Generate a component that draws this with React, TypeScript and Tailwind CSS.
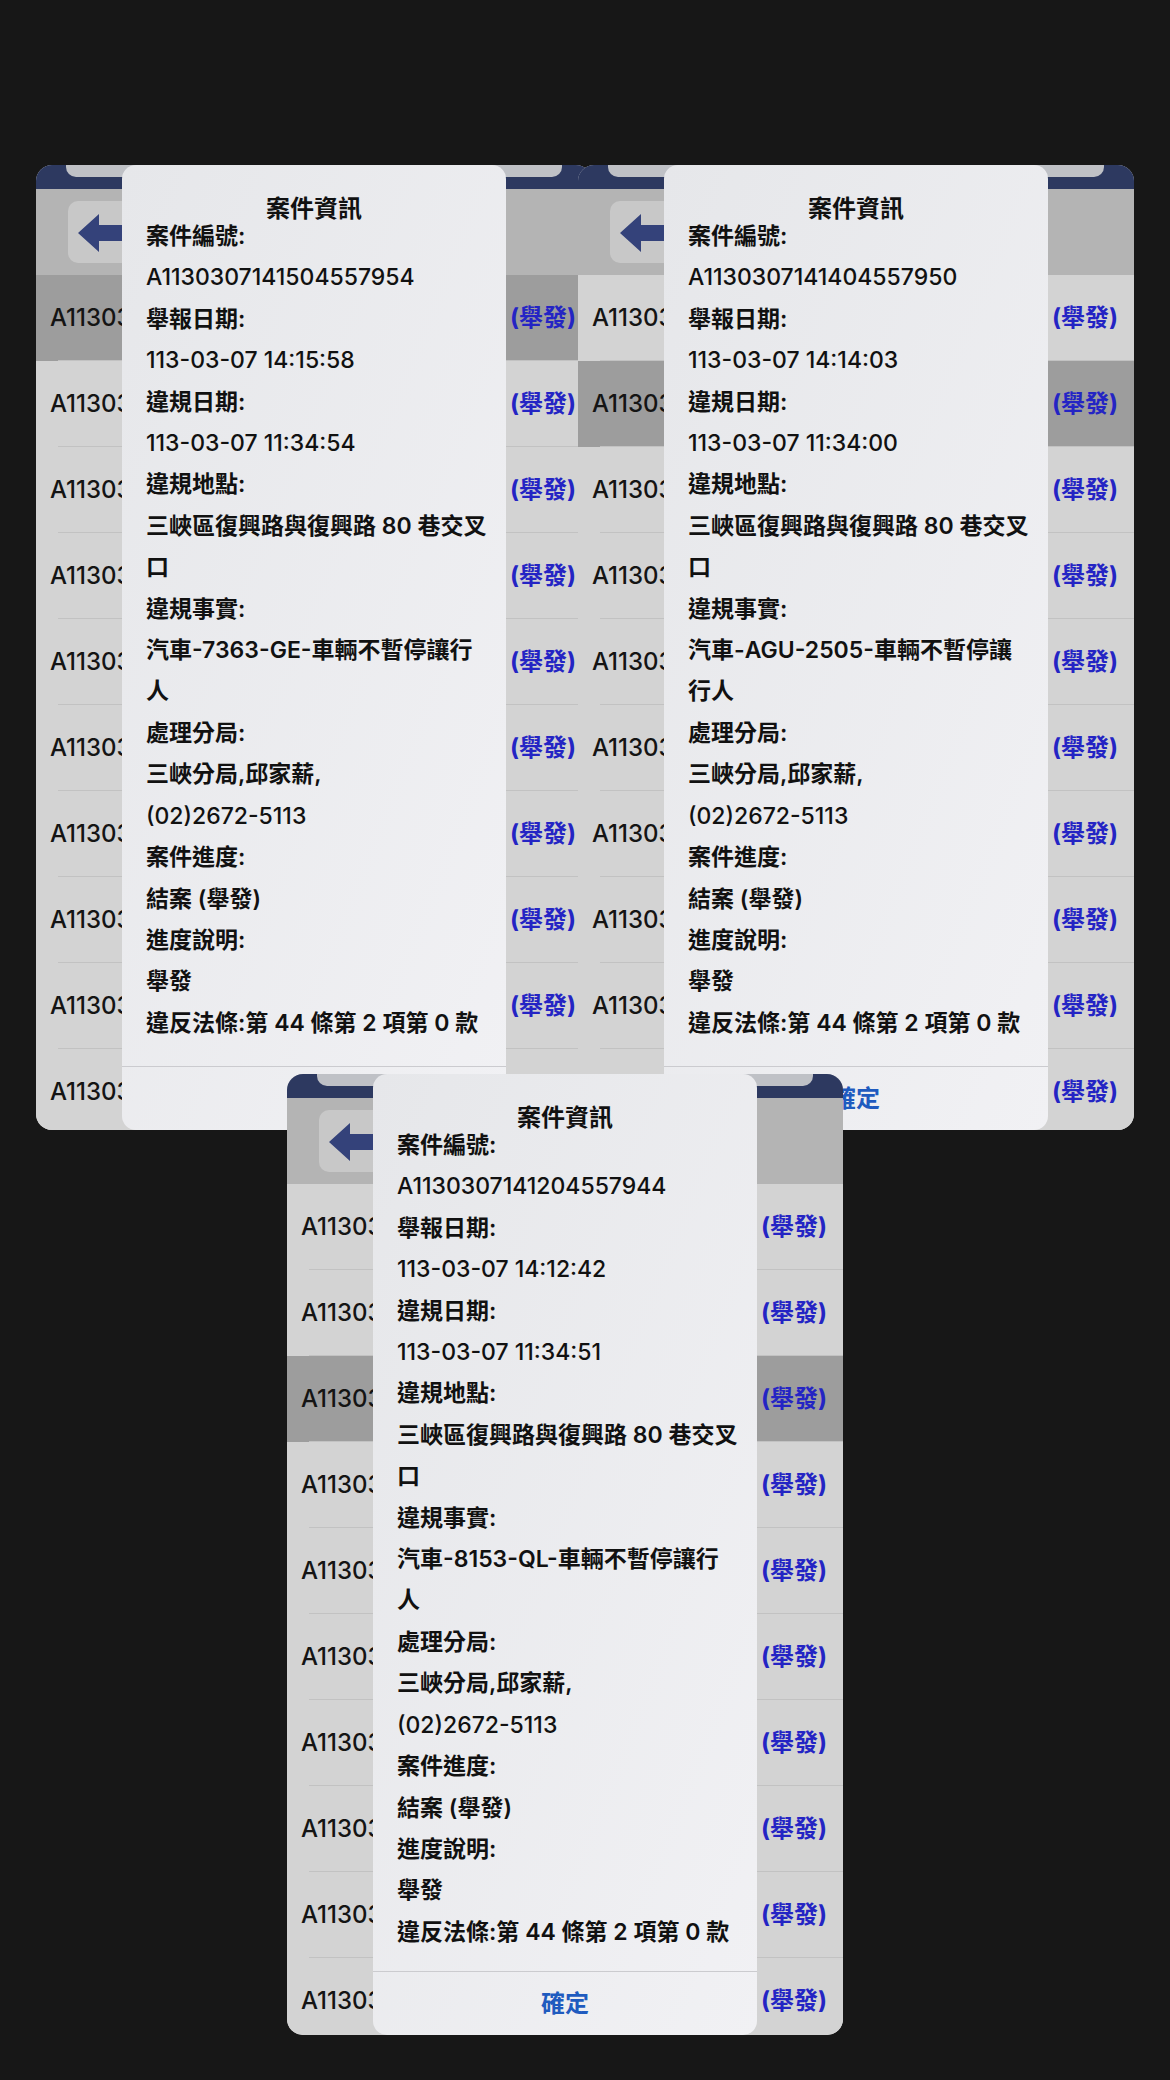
type Caso = {
  id: string
  reported: string
  violated: string
  fact: [string, string]
  selected: number
}

const cases: Caso[] = [
  {
    id: 'A1130307141504557954',
    reported: '113-03-07 14:15:58',
    violated: '113-03-07 11:34:54',
    fact: ['汽車-7363-GE-車輛不暫停讓行', '人'],
    selected: 0,
  },
  {
    id: 'A1130307141404557950',
    reported: '113-03-07 14:14:03',
    violated: '113-03-07 11:34:00',
    fact: ['汽車-AGU-2505-車輛不暫停讓', '行人'],
    selected: 1,
  },
  {
    id: 'A1130307141204557944',
    reported: '113-03-07 14:12:42',
    violated: '113-03-07 11:34:51',
    fact: ['汽車-8153-QL-車輛不暫停讓行', '人'],
    selected: 2,
  },
]

const rowIds = [
  'A1130307141504557954',
  'A1130307141404557950',
  'A1130307141204557944',
  'A1130307140904557931',
  'A1130307140704557925',
  'A1130307140404557918',
  'A1130307140104557902',
  'A1130307135804557897',
  'A1130307135504557885',
  'A1130307135204557870',
]

// lines made only of latin letters/digits render a bit lighter in the original
const latinOnly = /^[A-Za-z0-9()\-:\s]+$/

function BackArrow() {
  return (
    <svg width="96" height="62" viewBox="0 0 96 62">
      <polygon points="10,32 31,13 31,24 54,24 54,40 31,40 31,51" fill="#34427a" />
    </svg>
  )
}

function Panel({ c, pos }: { c: Caso; pos: string }) {
  const lines = [
    '案件編號:',
    c.id,
    '舉報日期:',
    c.reported,
    '違規日期:',
    c.violated,
    '違規地點:',
    '三峽區復興路與復興路 80 巷交叉',
    '口',
    '違規事實:',
    c.fact[0],
    c.fact[1],
    '處理分局:',
    '三峽分局,邱家薪,',
    '(02)2672-5113',
    '案件進度:',
    '結案 (舉發)',
    '進度說明:',
    '舉發',
    '違反法條:第 44 條第 2 項第 0 款',
  ]

  return (
    <div className={`absolute w-[556px] overflow-hidden rounded-[16px] bg-[#d3d3d3] ${pos}`}>
      <div className="h-[24px] bg-[#2d3960] px-[30px]">
        <div className="h-[12px] rounded-b-[10px] bg-[#bfc1c6]" />
      </div>
      <div className="h-[86px] bg-[#b4b4b4] px-[32px] pt-[12px]">
        <div className="h-[62px] w-[96px] rounded-[10px] bg-[#c8c8c8]">
          <BackArrow />
        </div>
      </div>
      <div>
        {rowIds.map((rid, i) => (
          <div key={rid} className={i === c.selected ? 'bg-[#9d9d9d]' : 'bg-[#d3d3d3]'}>
            <div className="flex h-[85px] items-center justify-between pl-[14px] pr-[16px]">
              <span className="text-[24px] font-medium text-[#141414]">{rid}</span>
              <span className="text-[24px] font-bold text-[#2424c4]">(舉發)</span>
            </div>
            <div className="ml-[22px] h-px bg-[#c2c2c2]" />
          </div>
        ))}
      </div>

      <div className="absolute bottom-0 left-[86px] top-0 flex w-[384px] flex-col rounded-[14px] bg-linear-to-br from-[#e6e7ea] to-[#f1f1f4] text-[#111]">
        <div className="pt-[32px] text-center text-[24px] leading-[24px] font-bold">案件資訊</div>
        <div className="-mt-[5px] px-[24px]">
          {lines.map((l, i) => (
            <div
              key={i}
              className={`whitespace-nowrap text-[23px] leading-[41.4px] ${latinOnly.test(l) ? 'font-medium' : 'font-semibold'}`}
            >
              {l}
            </div>
          ))}
        </div>
        <div className="mt-auto flex h-[64px] items-center justify-center border-t border-[#cbcbcf] text-[24px] font-bold text-[#1f5bbf]">
          確定
        </div>
      </div>
    </div>
  )
}

export default function App() {
  return (
    <div className="relative h-[2080px] w-[1170px] overflow-hidden bg-[#171717] font-['Inter','Noto_Sans_CJK_TC',sans-serif]">
      <Panel c={cases[0]} pos="left-[36px] top-[165px] h-[965px]" />
      <Panel c={cases[1]} pos="left-[578px] top-[165px] h-[965px]" />
      <Panel c={cases[2]} pos="left-[287px] top-[1074px] h-[961px]" />
    </div>
  )
}
